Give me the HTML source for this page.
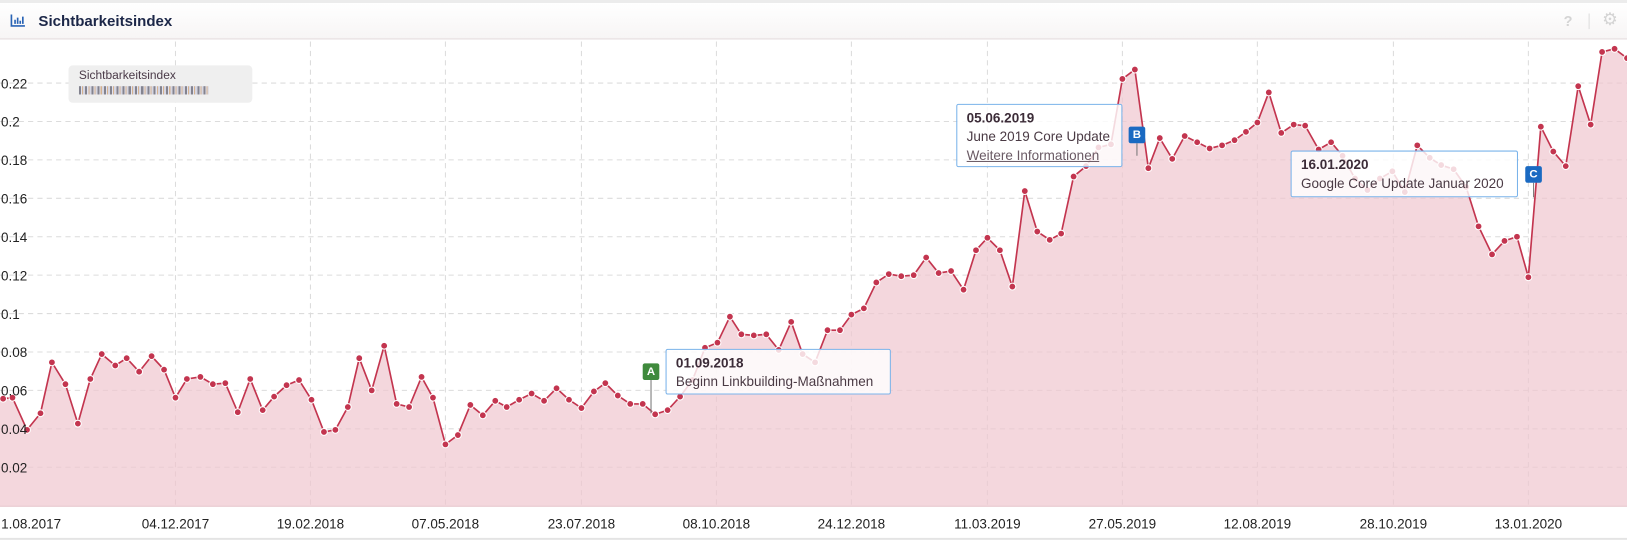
<!DOCTYPE html>
<html><head><meta charset="utf-8">
<style>
html,body{margin:0;padding:0;background:#fff;overflow:hidden;}
body{width:1627px;height:542px;}
#w{width:1567px;height:522px;transform:scale(1.0383,1.0383);transform-origin:0 0;position:relative;font-family:"Liberation Sans",sans-serif;}
.top{position:absolute;left:0;top:0;width:1567px;height:3px;background:#ececec;}
.hdr{position:absolute;left:0;top:3px;width:1567px;height:34px;background:linear-gradient(#fff,#f7f5f5);border-bottom:1px solid #e2dadc;}
.title{position:absolute;left:37px;top:10px;font-size:14.5px;font-weight:bold;color:#1c2748;}
.t{position:absolute;font-size:13px;color:#222;}
.tip{position:absolute;background:rgba(255,255,255,0.82);border:1px solid #7ab3ea;border-radius:2px;font-size:13px;color:#4a3a44;line-height:18px;padding:4px 9px;box-sizing:border-box;}
.tip b{color:#3c2c38;}
.flag{position:absolute;width:16px;height:16px;border-radius:2px;color:#fff;font-size:11px;font-weight:bold;text-align:center;line-height:16px;}
</style></head><body><div id="w">
<div class="top"></div>
<div class="hdr">
<svg style="position:absolute;left:10px;top:10px" width="15" height="13" viewBox="0 0 15 13"><path d="M1 1V12H14" stroke="#2a64b5" stroke-width="1.6" fill="none"/><path d="M4.5 10V6M7 10V4M9.5 10V7M12 10V3" stroke="#2a64b5" stroke-width="1.6"/></svg>
<div class="title">Sichtbarkeitsindex</div>
<div style="position:absolute;left:1506px;top:9px;font-size:14px;font-weight:bold;color:#d4d4d4">?</div>
<div style="position:absolute;left:1530px;top:10px;width:1px;height:15px;background:#ddd"></div>
<div style="position:absolute;left:1543px;top:6px;font-size:17px;color:#d4d4d4">&#9881;</div>
</div>
<svg style="position:absolute;left:0;top:0" width="1567" height="522" viewBox="0 0 1567 522">
<g stroke="#dcdcdc" stroke-dasharray="5,4" stroke-width="1">
<line x1="0" x2="1567" y1="80" y2="80"/><line x1="0" x2="1567" y1="117" y2="117"/><line x1="0" x2="1567" y1="154" y2="154"/><line x1="0" x2="1567" y1="191" y2="191"/><line x1="0" x2="1567" y1="228" y2="228"/><line x1="0" x2="1567" y1="265" y2="265"/><line x1="0" x2="1567" y1="302" y2="302"/><line x1="0" x2="1567" y1="339" y2="339"/><line x1="0" x2="1567" y1="376" y2="376"/><line x1="0" x2="1567" y1="413" y2="413"/><line x1="0" x2="1567" y1="450" y2="450"/>
<line x1="169" x2="169" y1="40" y2="487"/><line x1="299" x2="299" y1="40" y2="487"/><line x1="429" x2="429" y1="40" y2="487"/><line x1="560" x2="560" y1="40" y2="487"/><line x1="690" x2="690" y1="40" y2="487"/><line x1="820" x2="820" y1="40" y2="487"/><line x1="951" x2="951" y1="40" y2="487"/><line x1="1081" x2="1081" y1="40" y2="487"/><line x1="1211" x2="1211" y1="40" y2="487"/><line x1="1342" x2="1342" y1="40" y2="487"/><line x1="1472" x2="1472" y1="40" y2="487"/>
</g>
<path id="area" fill="#f0c6cf" fill-opacity="0.7" stroke="none" d=""/>
<path id="ln" fill="none" stroke="#c3354f" stroke-width="1.6" d=""/>
<g id="dots" fill="#c3354f" stroke="#fff" stroke-width="1"></g>
<line x1="0" x2="1567" y1="487.5" y2="487.5" stroke="#e6c3ca"/>
<line x1="0" x2="1567" y1="519" y2="519" stroke="#e4e4e4" stroke-width="2"/>
<g font-family="Liberation Sans, sans-serif" font-size="13" fill="#222">
<text x="1" y="85">0.22</text><text x="1" y="122">0.2</text><text x="1" y="159">0.18</text><text x="1" y="196">0.16</text><text x="1" y="233">0.14</text><text x="1" y="270">0.12</text><text x="1" y="307">0.1</text><text x="1" y="344">0.08</text><text x="1" y="381">0.06</text><text x="1" y="418">0.04</text><text x="1" y="455">0.02</text>
</g>
<g font-family="Liberation Sans, sans-serif" font-size="13" fill="#222" text-anchor="middle">
<text x="30" y="509">1.08.2017</text><text x="169" y="509">04.12.2017</text><text x="299" y="509">19.02.2018</text><text x="429" y="509">07.05.2018</text><text x="560" y="509">23.07.2018</text><text x="690" y="509">08.10.2018</text><text x="820" y="509">24.12.2018</text><text x="951" y="509">11.03.2019</text><text x="1081" y="509">27.05.2019</text><text x="1211" y="509">12.08.2019</text><text x="1342" y="509">28.10.2019</text><text x="1472" y="509">13.01.2020</text>
</g>
<line x1="627" x2="627" y1="366" y2="398" stroke="#777"/>
<line x1="1095" x2="1095" y1="138" y2="150" stroke="#777"/>
<line x1="1477" x2="1477" y1="176" y2="190" stroke="#777"/>
</svg>
<div style="position:absolute;left:66px;top:63px;width:177px;height:36px;background:#efefef;border-radius:4px;">
<div style="position:absolute;left:10px;top:4px;font-size:11.5px;color:#4a3a48">Sichtbarkeitsindex</div>
<div style="position:absolute;left:10px;top:20px;width:125px;height:8px;background:repeating-linear-gradient(90deg,#556 0 2px,#dde 2px 3px,#c96 3px 4px,#ccd 4px 6px);opacity:.7"></div>
</div>
<div class="tip" style="left:921px;top:100px;width:160px;height:61px;"><b>05.06.2019</b><br>June 2019 Core Update<br><span style="text-decoration:underline;color:#6a5a64">Weitere Informationen</span></div>
<div class="flag" style="left:1087px;top:122px;background:#1a6ac2">B</div>
<div class="tip" style="left:1243px;top:145px;width:219px;height:45px;"><b>16.01.2020</b><br>Google Core Update Januar 2020</div>
<div class="flag" style="left:1469px;top:160px;background:#1a6ac2">C</div>
<div class="tip" style="left:641px;top:336px;width:217px;height:44px;"><b>01.09.2018</b><br>Beginn Linkbuilding-Maßnahmen</div>
<div class="flag" style="left:619px;top:350px;background:#3f8a3c">A</div>
</div>
<script>
var p=[[0,384],[3,384],[12,383],[26,414],[39,398],[50,349],[63,370],[75,408],[87,365],[98,341],[111,352],[122,345],[134,358],[146,343],[158,356],[169,383],[180,365],[193,363],[205,370],[217,369],[229,397],[241,365],[253,395],[264,382],[276,371],[288,366],[300,385],[312,416],[323,414],[335,392],[346,345],[358,376],[370,333],[382,389],[394,392],[406,363],[417,383],[429,428],[441,419],[453,390],[465,400],[477,386],[488,392],[500,385],[512,379],[524,386],[536,374],[548,385],[560,393],[572,377],[583,369],[595,381],[607,389],[619,389],[631,399],[643,395],[655,382],[667,366],[679,335],[691,330],[703,305],[714,322],[726,323],[738,322],[750,337],[762,310],[773,341],[785,349],[797,318],[809,318],[820,303],[832,297],[844,272],[856,264],[868,266],[880,265],[892,248],[904,263],[916,261],[928,279],[940,241],[951,229],[963,241],[975,276],[987,184],[999,223],[1011,231],[1022,225],[1034,170],[1046,160],[1058,142],[1070,139],[1081,76],[1093,67],[1106,162],[1117,133],[1129,153],[1141,131],[1153,137],[1165,143],[1177,140],[1189,135],[1200,127],[1211,118],[1222,89],[1234,128],[1246,120],[1257,121],[1270,144],[1282,137],[1293,150],[1305,172],[1317,183],[1329,172],[1341,165],[1353,185],[1365,140],[1377,152],[1388,159],[1400,163],[1412,180],[1424,218],[1437,245],[1449,232],[1461,228],[1472,267],[1484,122],[1496,146],[1508,160],[1520,83],[1532,120],[1543,50],[1555,47],[1567,56]];
var d="M"+p.map(function(a){return a[0]+","+a[1]}).join(" L");
document.getElementById("ln").setAttribute("d",d);
document.getElementById("area").setAttribute("d",d+" L1567,487 L0,487 Z");
var g=document.getElementById("dots"),s="";
p.forEach(function(a,i){if(i%1==0&&i>0)s+='<circle cx="'+a[0]+'" cy="'+a[1]+'" r="3.3"/>';});
g.innerHTML=s;
</script>
</body></html>
